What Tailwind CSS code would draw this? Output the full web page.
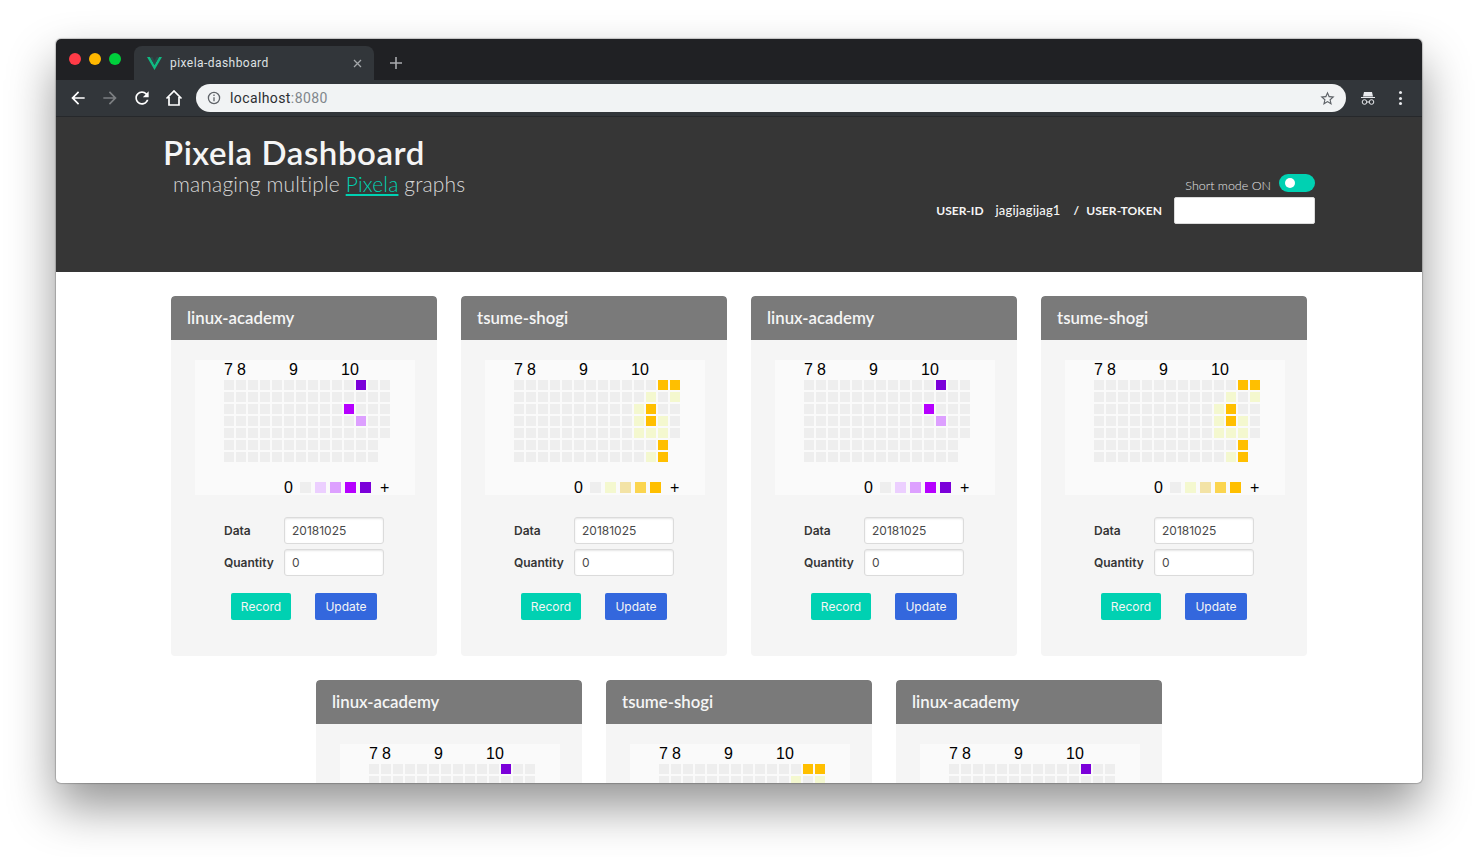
<!DOCTYPE html>
<html lang="en">
<head>
<meta charset="UTF-8">
<title>pixela-dashboard</title>
<script src="https://cdn.jsdelivr.net/npm/@tailwindcss/browser@4"></script>
</head>
<body class="bg-white h-[857px] overflow-hidden pt-[39px] pl-[56px] font-['Lato',sans-serif]">

<div class="w-[1366px] h-[744px] rounded-[5px] overflow-hidden flex flex-col bg-white shadow-[0_0_1px_1px_rgba(0,0,0,0.2),0_24px_48px_0_rgba(0,0,0,0.42)]">

  <!-- tab strip -->
  <div class="h-[41px] bg-[#202124] flex items-end shrink-0 pl-[13px]">
    <div class="flex gap-[8px] self-start mt-[14px] w-[65px]">
      <span class="w-[12px] h-[12px] rounded-full bg-[#ff3b47]"></span>
      <span class="w-[12px] h-[12px] rounded-full bg-[#ffb800]"></span>
      <span class="w-[12px] h-[12px] rounded-full bg-[#00d03c]"></span>
    </div>
    <div class="w-[240px] h-[34px] bg-[#32363a] rounded-t-[8px] flex items-center pl-[13px] pr-[12px]">
      <svg class="w-[15px] h-[13px]" viewBox="0 0 15 13"><polygon points="0,0 3,0 7.5,8 12,0 15,0 7.5,13" fill="#10b981"/><polygon points="3,0 5.4,0 7.5,3.8 9.6,0 12,0 7.5,8" fill="#2c4a4a"/></svg>
      <span class="ml-[8px] text-[12px] text-[#dfe1e3] font-['Roboto',sans-serif] tracking-[0.45px]">pixela-dashboard</span>
      <svg class="ml-auto w-[9px] h-[9px]" viewBox="0 0 9 9" stroke="#a4a7aa" stroke-width="1.3"><path d="M1 1l7 7M8 1l-7 7"/></svg>
    </div>
    <svg class="ml-[16px] mb-[11px] w-[12px] h-[12px]" viewBox="0 0 12 12" stroke="#a9abae" stroke-width="1.6"><path d="M6 0v12M0 6h12"/></svg>
  </div>

  <!-- toolbar -->
  <div class="h-[37px] bg-[#32363a] border-b border-[#26282b] flex items-center shrink-0 pl-[12px]">
    <svg class="w-[20px] h-[20px]" viewBox="0 0 24 24" fill="#fff"><path d="M20 11H7.83l5.59-5.59L12 4l-8 8 8 8 1.41-1.41L7.83 13H20v-2z"/></svg>
    <svg class="ml-[12px] w-[20px] h-[20px]" viewBox="0 0 24 24" fill="#7b7e81"><path d="M4 11h12.17l-5.59-5.59L12 4l8 8-8 8-1.41-1.41L16.17 13H4v-2z"/></svg>
    <svg class="ml-[12px] w-[20px] h-[20px]" viewBox="0 0 24 24" fill="#fff"><path d="M17.65 6.35C16.2 4.9 14.21 4 12 4c-4.42 0-7.99 3.58-7.99 8s3.57 8 7.99 8c3.73 0 6.84-2.55 7.73-6h-2.08c-.82 2.33-3.04 4-5.65 4-3.31 0-6-2.69-6-6s2.69-6 6-6c1.66 0 3.14.69 4.22 1.78L13 11h7V4l-2.35 2.35z"/></svg>
    <svg class="ml-[12px] w-[20px] h-[20px]" viewBox="0 0 20 20" fill="none" stroke="#fff" stroke-width="1.7"><path d="M2.5 10.5L10 3l7.5 7.5M5 9v8h10V9"/></svg>
    <div class="ml-[12px] w-[1150px] h-[28px] rounded-full bg-[#f1f3f4] flex items-center pl-[11px] pr-[10px]">
      <svg class="w-[14px] h-[14px]" viewBox="0 0 14 14" fill="none" stroke="#5f6368" stroke-width="1.3"><circle cx="7" cy="7" r="5.6"/><path d="M7 6.2v4M7 3.6v1.4"/></svg>
      <span class="ml-[9px] text-[14px] text-[#2c2e31] font-['Roboto',sans-serif] tracking-[0.4px]">localhost<span class="text-[#80868b]">:8080</span></span>
      <svg class="ml-auto w-[17px] h-[17px]" viewBox="0 0 24 24" fill="#5f6368"><path d="M22 9.24l-7.19-.62L12 2 9.19 8.63 2 9.24l5.46 4.73L5.82 21 12 17.27 18.18 21l-1.63-7.03L22 9.24zM12 15.4l-3.76 2.27 1-4.28-3.32-2.88 4.38-.38L12 6.1l1.71 4.04 4.38.38-3.32 2.88 1 4.28L12 15.4z"/></svg>
    </div>
    <svg class="ml-[15px] w-[14px] h-[14px]" viewBox="0 0 14 14"><path d="M3 1h8l1 4.500H2zM0 6h14v1H0z" fill="#e8eaed"/><circle cx="3.500" cy="11" r="2.300" fill="none" stroke="#e8eaed" stroke-width="1"/><circle cx="10.500" cy="11" r="2.300" fill="none" stroke="#e8eaed" stroke-width="1"/><path d="M5.800 11h2.400" stroke="#e8eaed"/></svg>
    <div class="ml-[24px] flex flex-col gap-[2.500px]">
      <span class="w-[3px] h-[3px] rounded-full bg-[#e8eaed]"></span>
      <span class="w-[3px] h-[3px] rounded-full bg-[#e8eaed]"></span>
      <span class="w-[3px] h-[3px] rounded-full bg-[#e8eaed]"></span>
    </div>
  </div>

  <div class="flex-1 overflow-hidden">
    <!-- page header -->
    <header class="h-[155px] bg-[#363636] flex justify-between px-[107px]">
      <div class="pt-[15px]">
        <h1 class="text-[33px] leading-[40px] font-semibold text-[#f5f5f5] tracking-[0.55px]">Pixela Dashboard</h1>
        <p class="pl-[10px] text-[21px] leading-[24px] font-light text-[#d6d6d6] tracking-[0.15px]">managing multiple <a class="text-[#00d1b2] underline">Pixela</a> graphs</p>
      </div>
      <div class="pt-[57px] flex flex-col items-end">
        <div class="flex items-center h-[18px]">
          <span class="mt-[6px] text-[12.500px] font-light text-[#e4e4e4]">Short mode ON</span>
          <span class="ml-[8px] w-[36px] h-[18px] rounded-full bg-[#00d1b2] flex items-center pl-[6px]"><span class="w-[10px] h-[10px] rounded-full bg-white"></span></span>
        </div>
        <div class="mt-[5px] flex items-center text-[12px] font-bold text-[#f5f5f5]">
          <span class="mt-[1px]">USER-ID</span>
          <span class="mt-[1px] ml-[12px] text-[13px] font-medium tracking-[0.15px]">jagijagijag1</span>
          <span class="mt-[1px] ml-[13px]">/</span>
          <span class="mt-[1px] ml-[7px] tracking-[0.1px]">USER-TOKEN</span>
          <input class="ml-[12px] w-[141px] h-[27px] bg-white rounded-[2px] border border-[#dbdbdb]">
        </div>
      </div>
    </header>

    <main id="graphs" class="flex flex-wrap justify-center gap-6 py-6"></main>
  </div>
</div>

<script>
const purple = {
  rows: ["...........4..", "..............", "..........3...", "...........2..", "..............", ".............", "............."],
  legend: ["bg-[#eeeeee]", "bg-[#eccfff]", "bg-[#dda0ff]", "bg-[#b600ff]", "bg-[#7b00d9]"]
};
const yellow = {
  rows: ["............44", "...........1.1", "..........14..", "..........141.", "..........111.", "............4", "...........14"],
  legend: ["bg-[#eeeeee]", "bg-[#f4f8cf]", "bg-[#f3e3a6]", "bg-[#fbd54f]", "bg-[#ffbf00]"]
};

const cards = [
  ["linux-academy", purple], ["tsume-shogi", yellow], ["linux-academy", purple], ["tsume-shogi", yellow],
  ["linux-academy", purple], ["tsume-shogi", yellow], ["linux-academy", purple],
];

function graph(g) {
  let cells = "";
  g.rows.forEach(row => {
    for (let i = 0; i < row.length; i++) {
      const color = row[i] === "." ? g.legend[0] : g.legend[Number(row[i])];
      cells += `<span class="w-[10px] h-[10px] ${color}"></span>`;
    }
    if (row.length < 14) cells += "<span></span>";
  });
  const legend = g.legend.map(c => `<span class="w-[11px] h-[11px] mr-[4px] ${c}"></span>`).join("");
  return `
    <div class="ml-[24px] w-[220px] h-[135px] bg-[#fafafa] font-['Liberation_Sans',sans-serif] text-[16px] text-black">
      <div class="h-[20px] pl-[29px] flex items-center leading-[18px]">
        <span class="w-[13px]">7</span><span class="w-[52px]">8</span><span class="w-[52px]">9</span><span>10</span>
      </div>
      <div class="ml-[29px] grid grid-cols-[repeat(14,10px)] auto-rows-[10px] gap-[2px]">${cells}</div>
      <div class="mt-[18px] pl-[89px] flex items-center h-[15px]">
        <span class="w-[16px]">0</span>${legend}<span class="ml-[5px]">+</span>
      </div>
    </div>`;
}

document.getElementById("graphs").innerHTML = cards.map(([name, g]) => `
  <section class="w-[266px] h-[360px] rounded-[4px] overflow-hidden bg-[#f5f5f5]">
    <div class="h-[44px] bg-[#7a7a7a] rounded-t-[4px] flex items-center pl-[16px] text-[16.800px] font-semibold text-[#f5f5f5]">${name}</div>
    <div class="pt-[20px]">
      ${graph(g)}
      <div class="mt-[22px] ml-[53px] flex flex-col gap-[5px] text-[12px] font-['Inter',sans-serif] text-[#363636]">
        <label class="flex items-center font-semibold"><span class="w-[60px] pt-[1px]">Data</span><input value="20181025" class="w-[100px] h-[27px] px-[7px] bg-white border border-[#dbdbdb] rounded-[3px] font-normal text-[#4a4a4a] shadow-[inset_0_1px_2px_rgba(10,10,10,0.1)]"></label>
        <label class="flex items-center font-semibold"><span class="w-[60px] pt-[1px]">Quantity</span><input value="0" class="w-[100px] h-[27px] px-[7px] bg-white border border-[#dbdbdb] rounded-[3px] font-normal text-[#4a4a4a] shadow-[inset_0_1px_2px_rgba(10,10,10,0.1)]"></label>
      </div>
      <div class="mt-[17px] ml-[60px] flex gap-[24px] text-[12px] font-['Inter',sans-serif] text-[#f5f5f5]">
        <button class="w-[60px] h-[27px] bg-[#00d1b2] rounded-[2px]">Record</button>
        <button class="w-[62px] h-[27px] bg-[#3367dd] rounded-[2px]">Update</button>
      </div>
    </div>
  </section>`).join("");
</script>
</body>
</html>
